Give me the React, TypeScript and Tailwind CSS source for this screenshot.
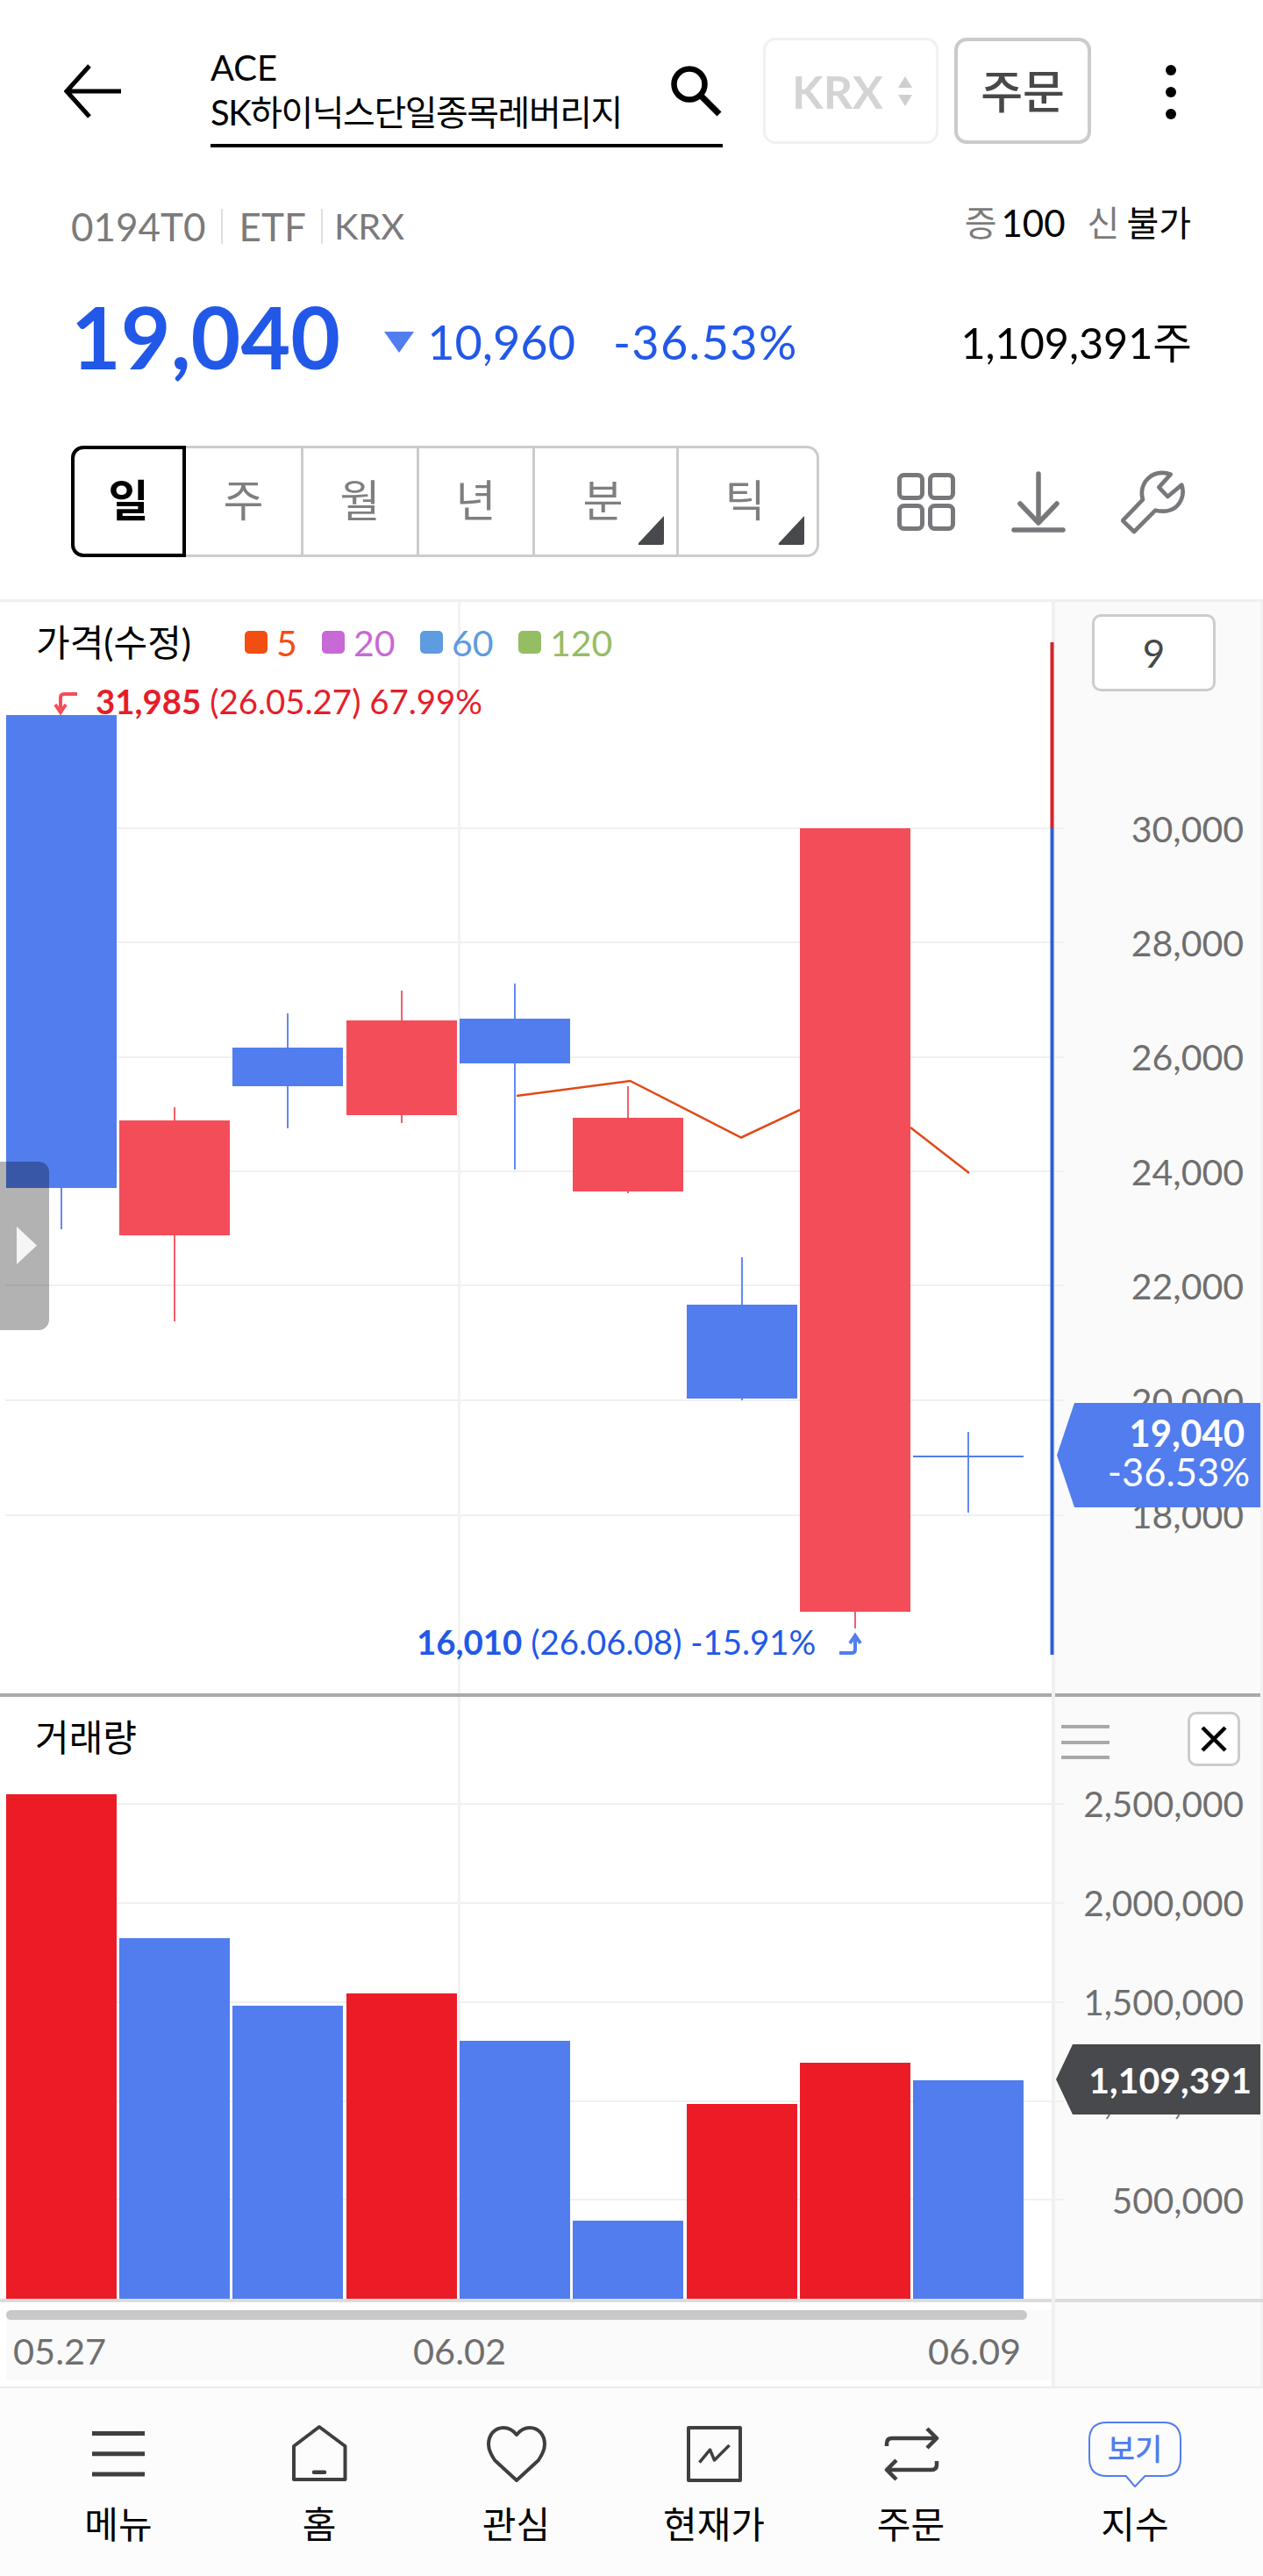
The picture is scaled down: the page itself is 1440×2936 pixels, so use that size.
import { Fragment } from 'react'

const BLUE = '#517dee'
const RED = '#f34d5a'

// candle x range is 7 + 129.5 * i, width 126
const candles = [
  { x: 7, top: 815, bottom: 1354, hi: 815, lo: 1401, color: BLUE },
  { x: 136, top: 1277, bottom: 1408, hi: 1262, lo: 1506, color: RED },
  { x: 265, top: 1194, bottom: 1238, hi: 1155, lo: 1286, color: BLUE },
  { x: 395, top: 1163, bottom: 1271, hi: 1129, lo: 1280, color: RED },
  { x: 524, top: 1161, bottom: 1212, hi: 1121, lo: 1333, color: BLUE },
  { x: 653, top: 1274, bottom: 1358, hi: 1238, lo: 1360, color: RED },
  { x: 783, top: 1487, bottom: 1594, hi: 1433, lo: 1596, color: BLUE },
  { x: 912, top: 944, bottom: 1837, hi: 944, lo: 1856, color: RED },
  { x: 1041, top: 1659, bottom: 1661, hi: 1632, lo: 1724, color: BLUE },
]

const volumes = [
  { x: 7, top: 2045, color: '#ec1c27' },
  { x: 136, top: 2209, color: BLUE },
  { x: 265, top: 2286, color: BLUE },
  { x: 395, top: 2272, color: '#ec1c27' },
  { x: 524, top: 2326, color: BLUE },
  { x: 653, top: 2531, color: BLUE },
  { x: 783, top: 2398, color: '#ec1c27' },
  { x: 912, top: 2351, color: '#ec1c27' },
  { x: 1041, top: 2371, color: BLUE },
]

const priceGrid = [944, 1074, 1205, 1335, 1465, 1596, 1727]
const volumeGrid = [2056, 2169, 2282, 2395, 2507]
const priceLabels = ['30,000', '28,000', '26,000', '24,000', '22,000', '20,000', '18,000']
const volumeLabels = ['2,500,000', '2,000,000', '1,500,000', '1,000,000', '500,000']

const tabs = [
  { label: '주', w: 'w-[134px]' },
  { label: '월', w: 'w-[132px]' },
  { label: '년', w: 'w-[132px]' },
  { label: '분', w: 'w-[164px]', menu: true },
  { label: '틱', w: 'w-[157px]', menu: true },
]

const legend = [
  { label: '5', box: 'bg-[#f24e12]', text: 'text-[#f24e12]', w: 'w-[88px]' },
  { label: '20', box: 'bg-[#c769d6]', text: 'text-[#c769d6]', w: 'w-[112px]' },
  { label: '60', box: 'bg-[#5e9be0]', text: 'text-[#5e9be0]', w: 'w-[112px]' },
  { label: '120', box: 'bg-[#94bd64]', text: 'text-[#94bd64]', w: 'w-auto' },
]

function NavIcon({ name }: { name: string }) {
  return (
    <svg width="120" height="76" viewBox="0 0 120 76" fill="none" stroke="#3f3f41" strokeWidth="4" strokeLinejoin="round">
      {name === 'menu' && <path d="M30 13.5H90M30 36.7H90M30 60H90" strokeWidth="5" />}
      {name === 'home' && (
        <>
          <path d="M60 6L89.5 28V66H31V28Z" />
          <path d="M54 57.7H66" strokeWidth="4.5" strokeLinecap="round" />
        </>
      )}
      {name === 'heart' && (
        <path d="M60 15C56 10 51 7 45 7C35 7 28 15 28 26C28 33 31 38 35 44L60 67L85 44C89 38 92 33 92 26C92 15 85 7 75 7C69 7 64 10 60 15Z" />
      )}
      {name === 'chart' && (
        <>
          <rect x="31" y="7" width="59" height="60" />
          <path d="M43.5 46.7L55.5 32L60.5 44L77.5 27" strokeWidth="3.5" />
        </>
      )}
      {name === 'order' && (
        <path d="M32 28V25Q32 19 38 19H89M78 8L89 19L78 30M89 45V49Q89 55 83 55H32M43 44L32 55L43 66" strokeWidth="4.5" />
      )}
      {name === 'bubble' && (
        <path
          d="M28 1H92.5Q112 1 112 21V42Q112 62 92.5 62H71.5L60 74L49.7 62H28Q8 62 8 42V21Q8 1 28 1Z"
          stroke={BLUE}
          strokeWidth="2"
        />
      )}
    </svg>
  )
}

const navItems = [
  { icon: 'menu', label: '메뉴', w: 'w-[270px]' },
  { icon: 'home', label: '홈', w: 'w-[188px]' },
  { icon: 'heart', label: '관심', w: 'w-[261px]' },
  { icon: 'chart', label: '현재가', w: 'w-[190px]' },
  { icon: 'order', label: '주문', w: 'w-[259px]' },
  { icon: 'bubble', label: '지수', w: 'w-[252px]' },
]

function Candles() {
  return (
    <svg className="absolute left-0 top-0 overflow-visible" width="1203" height="1244" viewBox="0 686 1203 1244">
      {priceGrid.map((y) => (
        <rect key={y} x="6" y={y - 1} width="1207" height="2" fill="#f0f0f0" />
      ))}
      <rect x="522" y="686" width="3" height="1244" fill="#f2f2f2" />
      <rect x="1199" y="686" width="4" height="1244" fill="#f0f0f0" />
      {candles.map((c) => (
        <Fragment key={c.x}>
          <rect x={c.x + 62} y={c.hi} width="2" height={c.lo - c.hi} fill={c.color} opacity="0.9" />
          <rect x={c.x} y={c.top} width="126" height={c.bottom - c.top} fill={c.color} />
        </Fragment>
      ))}
      <polyline
        points="589,1249 718.5,1232 845,1296.5 912,1265"
        fill="none"
        stroke="#e04a16"
        strokeWidth="2.5"
      />
      <polyline points="1038,1285 1105,1337" fill="none" stroke="#e04a16" strokeWidth="2.5" />
      <rect x="1197.5" y="732" width="4" height="212" fill="#d3242e" />
      <rect x="1197.5" y="944" width="4" height="942" fill="#2e5fd6" />
      <path d="M88 791H73Q69 791 69 795V808M63 803L69 812L75 803" fill="none" stroke={RED} strokeWidth="4" />
      <path d="M957 1884H971Q975 1884 975 1880V1868M969 1873L975 1864L981 1873" fill="none" stroke={BLUE} strokeWidth="4" />
    </svg>
  )
}

function Volumes() {
  return (
    <svg className="absolute left-0 top-0 overflow-visible" width="1203" height="686" viewBox="0 1934 1203 686">
      {volumeGrid.map((y) => (
        <rect key={y} x="6" y={y - 1} width="1207" height="2" fill="#f0f0f0" />
      ))}
      <rect x="522" y="1934" width="3" height="686" fill="#f2f2f2" />
      <rect x="1199" y="1934" width="4" height="686" fill="#f0f0f0" />
      {volumes.map((v) => (
        <rect key={v.x} x={v.x} y={v.top} width="126" height={2620 - v.top} fill={v.color} />
      ))}
    </svg>
  )
}

export default function App() {
  return (
    <div className="flex h-[2936px] w-[1440px] flex-col overflow-hidden bg-white font-['Lato','Noto_Sans_CJK_KR',sans-serif] text-black">
      {/* top bar */}
      <div className="flex h-[172px] shrink-0 items-start pl-[73px] pt-[43px]">
        <svg width="66" height="62" viewBox="0 0 66 62" fill="none" stroke="#000" strokeWidth="5" className="mt-[30px]">
          <path d="M65 31H3M29 2L3 31L29 60" />
        </svg>
        <div className="ml-[101px] flex h-[125px] w-[584px] items-start justify-between border-b-[4px] border-black">
          <div className="pt-[9px] text-[40px] leading-[51px]">
            <div>ACE</div>
            <div className="tracking-[-1.5px]">SK하이닉스단일종목레버리지</div>
          </div>
          <svg width="60" height="60" viewBox="0 0 60 60" fill="none" stroke="#000" strokeWidth="6.5" className="mr-[1px] mt-[30px]">
            <circle cx="23" cy="23" r="17.5" />
            <path d="M35 35L57 57" strokeWidth="7" />
          </svg>
        </div>
        <div className="ml-[46px] flex h-[121px] w-[200px] items-center rounded-[14px] border-[3px] border-[#f0f1f1] pl-[30px]">
          <span className="text-[52px] font-bold leading-none text-[#d4d4d4]">KRX</span>
          <svg width="18" height="34" viewBox="0 0 18 34" fill="#cfcfcf" className="ml-[16px]">
            <path d="M9 0L17 13H1ZM9 34L1 21H17Z" />
          </svg>
        </div>
        <div className="ml-[18px] flex h-[121px] w-[156px] items-center justify-center rounded-[14px] border-[4px] border-[#cbcbcb] text-[52px] font-medium leading-none text-[#47484a]">
          주문
        </div>
        <div className="-mt-[6px] ml-[85px] flex h-[62px] flex-col justify-between self-center">
          <span className="h-[12px] w-[12px] rounded-full bg-black" />
          <span className="h-[12px] w-[12px] rounded-full bg-black" />
          <span className="h-[12px] w-[12px] rounded-full bg-black" />
        </div>
      </div>

      {/* code row */}
      <div className="mt-[64px] flex h-[44px] shrink-0 items-center justify-between pl-[81px] pr-[82px]">
        <div className="flex items-center text-[44px] leading-none text-[#7b7b7b]">
          <span>0194T0</span>
          <span className="ml-[17px] mr-[19px] h-[40px] w-[2px] bg-[#dedede]" />
          <span>ETF</span>
          <span className="ml-[17px] mr-[13px] h-[40px] w-[2px] bg-[#dedede]" />
          <span className="text-[41.5px]">KRX</span>
        </div>
        <div className="-mt-[8px] flex items-center text-[40px] leading-none">
          <span className="text-[#7b7b7b]">증</span>
          <span className="ml-[5px] text-[42px]">100</span>
          <span className="ml-[25px] text-[#7b7b7b]">신</span>
          <span className="ml-[8px]">불가</span>
        </div>
      </div>

      {/* price row */}
      <div className="mt-[58px] flex h-[100px] shrink-0 items-center pl-[81px] pr-[81px]">
        <span className="-mt-[10px] text-[98px] font-bold leading-none text-[#2258e8]">19,040</span>
        <svg width="34" height="24" viewBox="0 0 34 24" fill={BLUE} className="ml-[50px] mt-[4px]">
          <path d="M0 0H34L17 24Z" />
        </svg>
        <span className="ml-[15px] mt-[3px] text-[54px] leading-none text-[#2258e8]">10,960</span>
        <span className="ml-[43px] mt-[3px] text-[54px] leading-none tracking-[1.3px] text-[#2258e8]">-36.53%</span>
        <span className="ml-auto mt-[4px] text-[48.5px] leading-none">1,109,391주</span>
      </div>

      {/* period tabs */}
      <div className="mt-[70px] flex h-[127px] shrink-0 items-center pl-[81px]">
        <div className="flex h-[127px] w-[853px] rounded-[14px] border-[3px] border-l-0 border-[#cccccc]">
          <div className="-my-[3px] flex w-[131px] shrink-0 items-center justify-center rounded-l-[14px] border-[4px] border-black pb-[4px] text-[50px] font-bold leading-none">
            일
          </div>
          {tabs.map((tab, i) => (
            <div
              key={tab.label}
              className={`relative flex items-center justify-center pb-[4px] text-[50px] leading-none text-[#7f7f7f] ${tab.w} ${
                i < tabs.length - 1 ? 'border-r-[3px] border-[#cccccc]' : ''
              }`}
            >
              <span className={tab.menu ? 'pr-[6px]' : ''}>{tab.label}</span>
              {tab.menu && (
                <svg width="32" height="33" viewBox="0 0 32 33" fill="#48494c" className="absolute bottom-[11px] right-[12px]">
                  <path d="M30 0V31Q30 33 28 33H2Q0 33 1 31Z" />
                </svg>
              )}
            </div>
          ))}
        </div>
        <svg width="66" height="66" viewBox="0 0 66 66" fill="none" stroke="#77787b" strokeWidth="5" className="ml-[89px]">
          <rect x="2.5" y="2.5" width="26" height="26" rx="5" />
          <rect x="37.5" y="2.5" width="26" height="26" rx="5" />
          <rect x="2.5" y="37.5" width="26" height="26" rx="5" />
          <rect x="37.5" y="37.5" width="26" height="26" rx="5" />
        </svg>
        <svg width="62" height="70" viewBox="0 0 62 70" fill="none" stroke="#77787b" strokeWidth="5.5" strokeLinecap="round" strokeLinejoin="round" className="ml-[64px]">
          <path d="M31 3V59M10 37L31 59L52 37" />
          <path d="M3 67H59" />
        </svg>
        <svg width="74" height="74" viewBox="830 50 222 222" fill="none" stroke="#77787b" strokeWidth="14" strokeLinejoin="round" className="ml-[63px] mt-[2px]">
          <path d="M905 150C897 125 903 95 925 76C945 58 975 54 1000 64L960 108L990 140L1038 100C1048 130 1038 160 1015 178C995 192 970 192 948 187L875 260L836 222Z" />
        </svg>
      </div>

      {/* price chart */}
      <div className="mt-[48px] h-[3px] shrink-0 bg-[#efefef]" />
      <div className="flex h-[1244px] shrink-0">
        <div className="relative z-10 h-full w-[1203px] shrink-0">
          <Candles />
          <div className="absolute left-[41px] top-[22px] flex h-[48px] items-center text-[41px] leading-none">
            <span className="w-[238px] text-[42px]">가격(수정)</span>
            {legend.map((l) => (
              <span key={l.label} className={`flex items-center ${l.w}`}>
                <span className={`h-[26px] w-[26px] rounded-[5px] ${l.box}`} />
                <span className={`ml-[10px] ${l.text}`}>{l.label}</span>
              </span>
            ))}
          </div>
          <div className="absolute left-[109px] top-[90px] text-[38.4px] leading-[46px] text-[#e51e2b]">
            <b>31,985</b> (26.05.27) 67.99%
          </div>
          <div className="absolute left-[475px] top-[1162px] text-[38.4px] leading-[46px] text-[#2258e8]">
            <b>16,010</b> (26.06.08) -15.91%
          </div>
          <div className="absolute left-0 top-[638px] flex h-[192px] w-[56px] items-start rounded-r-[12px] bg-black/30 pl-[19px] pt-[74px]">
            <svg width="23" height="43" viewBox="0 0 23 43" fill="#f5f5f5">
              <path d="M0 0L23 21.5L0 43Z" />
            </svg>
          </div>
        </div>
        <div className="relative flex h-full w-[234px] shrink-0 flex-col items-end bg-[#fafafa] pr-[19px] text-[41px] leading-none text-[#6f6f6f]">
          <div className="mb-[91px] mr-[32px] mt-[14px] flex h-[88px] w-[141px] shrink-0 items-center justify-center rounded-[10px] border-[3px] border-[#cccccc] bg-white text-[44px] text-[#47484a]">
            9
          </div>
          {priceLabels.map((label) => (
            <div key={label} className="flex h-[130.4px] shrink-0 items-center">
              {label}
            </div>
          ))}
          <div className="absolute -right-0 left-[2px] top-[913px] flex h-[119px] flex-col items-end justify-center bg-[#517dee] pb-[7px] pr-[12px] text-white [clip-path:polygon(20px_0,100%_0,100%_100%,20px_100%,0_50%)]">
            <span className="mr-[6px] text-[42px] font-bold leading-[44px]">19,040</span>
            <span className="text-[43.5px] leading-[44px]">-36.53%</span>
          </div>
        </div>
        <div className="w-[3px] shrink-0 bg-[#f2f2f2]" />
      </div>

      {/* separator */}
      <div className="flex h-[4px] shrink-0">
        <div className="w-[1199px] bg-[#a8a8ad]" />
        <div className="w-[4px] bg-[#f0f0f0]" />
        <div className="w-[234px] bg-[#a8a8ad]" />
        <div className="w-[3px] bg-[#f2f2f2]" />
      </div>

      {/* volume chart */}
      <div className="flex h-[686px] shrink-0">
        <div className="relative z-10 h-full w-[1203px] shrink-0">
          <Volumes />
          <div className="absolute left-[40px] top-[22px] text-[42px] leading-[48px]">거래량</div>
        </div>
        <div className="relative flex h-full w-[234px] shrink-0 flex-col items-end bg-[#fafafa] pr-[19px] pt-[66px] text-[40.5px] leading-none text-[#6f6f6f]">
          {volumeLabels.map((label) => (
            <div key={label} className="flex h-[113px] shrink-0 items-center">
              {label}
            </div>
          ))}
          <div className="absolute left-[7px] top-[32px] flex h-[39px] w-[55px] flex-col justify-between">
            <span className="h-[4px] bg-[#a9a9a9]" />
            <span className="h-[4px] bg-[#a9a9a9]" />
            <span className="h-[4px] bg-[#a9a9a9]" />
          </div>
          <div className="absolute left-[151px] top-[17px] flex h-[62px] w-[60px] items-center justify-center rounded-[10px] border-[3px] border-[#cccccc] bg-white">
            <svg width="32" height="32" viewBox="0 0 32 32" stroke="#000" strokeWidth="4.5">
              <path d="M3 3L29 29M29 3L3 29" />
            </svg>
          </div>
          <div className="absolute bottom-[210px] left-[1px] right-0 flex h-[80px] items-center justify-end bg-[#48494c] pr-[10px] text-[41px] font-bold text-white [clip-path:polygon(19px_0,100%_0,100%_100%,19px_100%,0_50%)]">
            1,109,391
          </div>
        </div>
        <div className="w-[3px] shrink-0 bg-[#f2f2f2]" />
      </div>

      {/* date axis */}
      <div className="flex h-[4px] shrink-0 bg-[#dcdcdc]">
        <div className="ml-[1199px] w-[4px] bg-[#f0f0f0]" />
      </div>
      <div className="flex h-[96px] shrink-0">
        <div className="w-[1199px] shrink-0 pl-[7px] pt-[9px]">
          <div className="h-[80px] w-[1192px] bg-[#fafafa]">
            <div className="h-[11px] w-[1164px] rounded-full bg-[#c8c8c8]" />
            <div className="flex h-[72px] items-center pl-[8px] text-[41.5px] leading-none text-[#6f6f6f]">
              <span className="w-[456px]">05.27</span>
              <span className="w-[587px]">06.02</span>
              <span>06.09</span>
            </div>
          </div>
        </div>
        <div className="w-[4px] shrink-0 bg-[#f0f0f0]" />
        <div className="w-[234px] shrink-0 bg-[#fafafa]" />
        <div className="w-[3px] shrink-0 bg-[#f2f2f2]" />
      </div>
      <div className="h-[2px] shrink-0 bg-[#ececef]" />

      {/* bottom nav */}
      <div className="flex flex-1 bg-[#fcfcfc] pt-[38px]">
        {navItems.map((item) => (
          <div key={item.label} className={`flex shrink-0 flex-col items-center ${item.w}`}>
            <div className="relative h-[76px] w-[120px]">
              <NavIcon name={item.icon} />
              {item.icon === 'bubble' && (
                <span className="absolute inset-x-0 top-[8px] text-center text-[34px] font-medium leading-[46px] text-[#517dee]">
                  보기
                </span>
              )}
            </div>
            <span className="mt-[17px] text-[42px] leading-[48px] text-black">{item.label}</span>
          </div>
        ))}
      </div>
    </div>
  )
}
